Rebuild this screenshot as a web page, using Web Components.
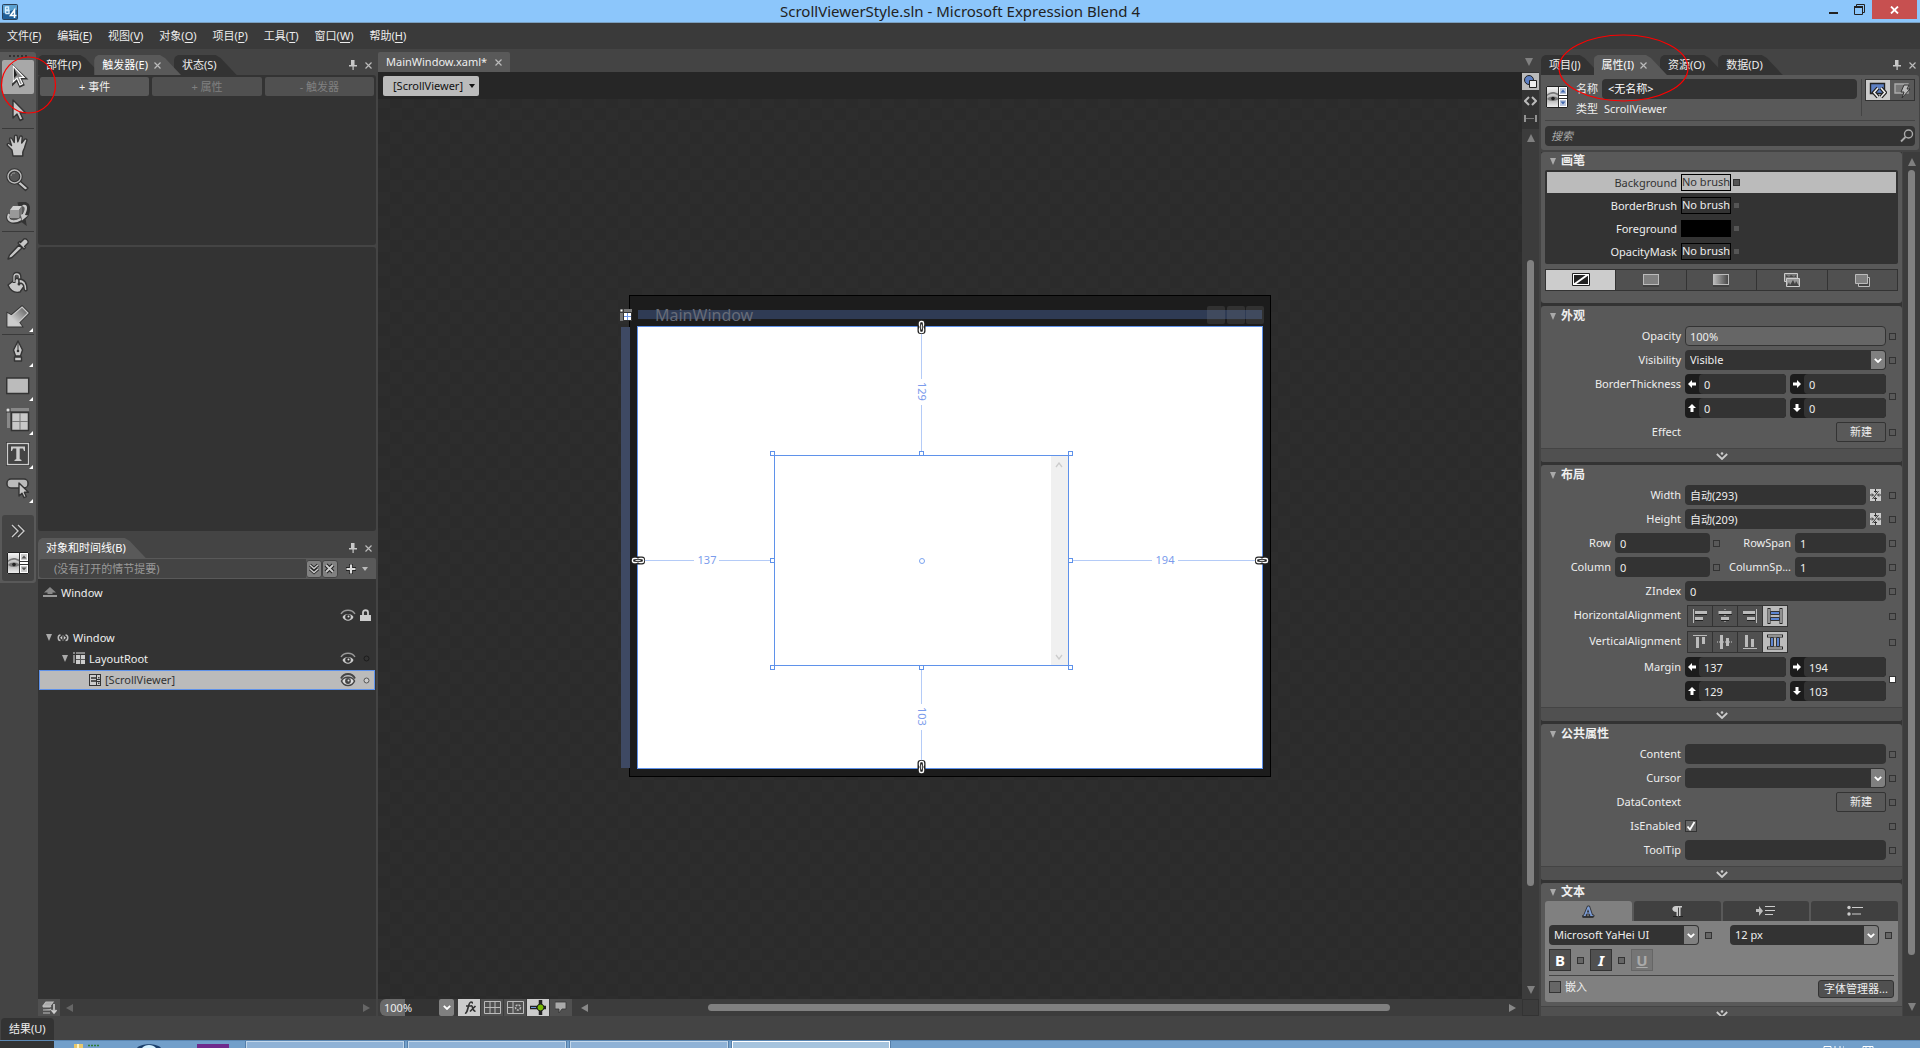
<!DOCTYPE html>
<html lang="zh-CN">
<head>
<meta charset="utf-8">
<title>ScrollViewerStyle.sln - Microsoft Expression Blend 4</title>
<style>
html,body{height:100%;margin:0}
body{background:#444;color:#eee;font:11px/16px "Noto Sans","Noto Sans CJK SC",sans-serif;overflow:hidden}
</style>
</head>
<body>
<blend-app></blend-app>
<script>
const BASE = `*{box-sizing:border-box}
button,input,select{font:inherit;color:inherit;margin:0;padding:0;border:0;background:none;border-radius:0}
button{display:flex;align-items:center;justify-content:center}
svg{display:block}`;

function define(name, css, html, setup) {
  customElements.define(name, class extends HTMLElement {
    connectedCallback() {
      if (this.shadowRoot) return;
      const root = this.attachShadow({ mode: 'open' });
      const t = document.createElement('template');
      t.innerHTML = `<style>${BASE}${css}</style>` + (typeof html === 'function' ? html(this) : html);
      root.appendChild(t.content.cloneNode(true));
      if (setup) setup(this, root);
    }
  });
}

/* ---------- icons: [width, height, markup] ---------- */
const O = 'fill="#c8c8c8" stroke="#333" stroke-width="1.4" stroke-linejoin="round"';
const ICONS = {
  logo: [16,16,`<rect x=".5" y=".5" width="15" height="15" rx="1" fill="#1f5f98" stroke="#2d4258"/><path d="M1 1h14v5C10 5 6 9 1 9z" fill="#5aa0d0"/><path d="M3.500 2.500v7M3.500 3h3v3h-3M3.500 6.500h3.500v3h-3.500" stroke="#d8eefc" stroke-width="1.400" fill="none"/><path d="M12.500 14V6L8.500 11.500H14.500" stroke="#fff" stroke-width="1.600" fill="none"/>`],
  min: [9,9,'<path d="M0 7h9v2H0z" fill="#222"/>'],
  restore: [11,11,'<path d="M.5 2.500h8v8h-8zM2.500 2V.5h8v8H9" fill="none" stroke="#222"/><path d="M0 2h9v2H0z" fill="#222"/>'],
  winclose: [9,8,'<path d="M1 .5l7 7M8 .5l-7 7" stroke="#fff" stroke-width="1.800"/>'],
  close: [7,7,'<path d="M.5 .5l6 6M6.500 .5l-6 6" stroke="#bbb" stroke-width="1.200"/>'],
  pin: [8,10,'<path d="M2 0h4v5h2v1.500H0V5h2zM3.500 6h1.200v4H3.500z" fill="#c8c8c8"/><path d="M5 0h1v5H5z" fill="#888"/>'],
  select: [22,26,`<path d="M6 2v18l4-4 3 6.500 3.500-1.700-3-6.300H19z" fill="#333" stroke="#333" stroke-width="2"/><path d="M6 2v16l4-4 3 7 2.500-1.200-3-6.300H17z" fill="#888" stroke="#fff" stroke-width="1.200"/><path d="M7 4v10l3-3z" fill="#222"/>`],
  direct: [22,26,`<path d="M6 2v18l4-4 3 6.500 3-1.500-3-6.300h5.500z" ${O}/>`],
  hand: [24,24,`<path d="M7 22l-1-6-4.500-4.500c-1-1.500.6-2.800 2-1.700l2 1.700L3.700 5.500c-.3-1.800 1.800-2.300 2.500-.5l2 3.500L8.500 2.500c0-1.800 2.600-1.800 2.700 0l.6 5.300 2-5c.5-1.500 2.700-1 2.400.8L15.700 9l2.700-3.500c1-1.300 3.100-.2 2.400 1.300l-2 6c-.5 2-1.500 3.500-2 5.500V22z" ${O}/>`],
  zoom: [24,24,`<path d="M14 13l8 7-2.500 2.500-8-7z" ${O}/><circle cx="8.500" cy="8.500" r="6.500" fill="#555" stroke="#333" stroke-width="3.500"/><circle cx="8.500" cy="8.500" r="6.500" fill="none" stroke="#bbb" stroke-width="1.400"/><path d="M5 8c.5-2.500 2-3 4-3" stroke="#999" fill="none"/>`],
  rotate: [24,24,`<path d="M3 12c-3 8 5 10 13 6l2 1.500-1-6 5-6c.8-6-4-7-10-5M22 7c0 4-1 7-5 10" fill="none" stroke="#333" stroke-width="4"/><path d="M3 12c-3 8 5 9 12 5" fill="none" stroke="#c8c8c8" stroke-width="2.400"/><path d="M17 3c5-1 5 4 2 10l3 .5-6 5-1.500-7 2 .8C19 8 20 5 16 4z" fill="#c8c8c8"/><path d="M4 8l3-4h9l-3 4z" fill="#d0d0d0"/><path d="M4 8h9v8H4z" fill="#999"/><path d="M13 8l3-4v8l-3 4z" fill="#777"/>`],
  dropper: [24,24,`<path d="M13 8l3 3L6 20.500l-4 1.500 1.500-4z" ${O}/><path d="M12 6l6 6 1.500-1.500-1-1L22 6c1-2-2-5-4-4l-3.500 3.500-1-1z" ${O}/>`],
  bucket: [24,24,`<path d="M2 14L11 7l8 7-5 7c-4 1-9 0-12-7z" ${O}/><path d="M8 12V6c0-5 6-5 6 0v7" fill="none" stroke="#333" stroke-width="3"/><path d="M8 11V6c0-4 5.500-4 5.500 0v7" fill="none" stroke="#c8c8c8" stroke-width="1.300"/><path d="M13 8c5 0 8 4 8 11-1.500 2-3 0-3-2 0-4-2-5-5-5z" ${O}/><circle cx="13" cy="13" r="1.500" fill="#333"/>`],
  gradient: [24,24,`<defs><linearGradient id="g" x1="0" y1="1" x2="1" y2="0"><stop offset=".3" stop-color="#ccc"/><stop offset="1" stop-color="#555"/></linearGradient></defs><path d="M16 2l6 6-9.500 9.500L15 21H2V9l3.500 2z" fill="url(#g)" stroke="#333" stroke-width="3"/><path d="M16 2l6 6-9.500 9.500L15 21H2V9l3.500 2z" fill="url(#g)" stroke="#c8c8c8" stroke-width="1.200"/>`],
  pen: [24,24,`<path d="M12 1l4.500 9-2 6h-5l-2-6z" ${O}/><path d="M8.500 17h7v4h-7z" ${O}/><path d="M12 3v7" stroke="#333"/><circle cx="12" cy="11" r="1.300" fill="#333"/>`],
  rect: [24,18,`<rect x=".7" y="1" width="22" height="15.500" fill="#bbb" stroke="#333" stroke-width="1.500"/>`],
  grid: [24,24,`<path d="M1 0h22v3H1zM1 3h3v17H1z" fill="#888"/><rect x="0" y="0" width="4" height="4" fill="#ddd" stroke="#333"/><rect x="5.500" y="4.500" width="17" height="18" fill="#c8c8c8" stroke="#333" stroke-width="1.500"/><path d="M14 5v17M6 13.500h16" stroke="#777"/>`],
  text: [24,24,`<rect x="1.500" y="1.500" width="21" height="21" fill="#444" stroke="#333" stroke-width="3"/><rect x="1.500" y="1.500" width="21" height="21" fill="none" stroke="#ccc" stroke-width="1.400"/><path d="M5 4.500h14V9h-1l-1-2.500h-3.300V17l1.800 1v1h-7v-1l1.800-1V6.500H7L6 9H5z" fill="#ccc"/>`],
  button: [24,22,`<rect x="1" y="2" width="21" height="9" rx="4" fill="#bbb" stroke="#333" stroke-width="1.500"/><path d="M13 6v13l3-2.800 2 4.500 2.300-1-2-4.400h4.200z" ${O}/>`],
  more: [14,14,'<path d="M1 1l6 6-6 6M7 1l6 6-6 6" fill="none" stroke="#333" stroke-width="3"/><path d="M1 1l6 6-6 6M7 1l6 6-6 6" fill="none" stroke="#ccc" stroke-width="1.400"/>'],
  viewer: [22,22,`<defs><linearGradient id="v" x2="0" y2="1"><stop stop-color="#f4f4f4"/><stop offset=".6" stop-color="#b0b0b0"/><stop offset="1" stop-color="#eee"/></linearGradient></defs><rect width="22" height="22" fill="#fff"/><rect x="1" y="1" width="11" height="20" fill="url(#v)"/><path d="M1 8.500c3-3 7-3.500 11-1v2C8 7 5 7.500 1 10z" fill="#777"/><path d="M1 13c3-3 7-3 11-1v1.500c-3 2-8 2-11-.5z" fill="#777"/><circle cx="7" cy="12.500" r="1.800" fill="#222"/><path d="M12.500 0v22M13 9.500h9M13 12.500h9" stroke="#333"/><path d="M14 2h6v6h-6zM14 14h6v6h-6z" fill="var(--sb,#ccc)"/><path d="M14.500 6.500L17 3.500l2.500 3zM14.500 15.500l2.500 3 2.500-3z" fill="var(--ar,#555)"/><path d="M.5 .5h21v21H.5z" fill="none" stroke="#222"/>`],
  viewersm: [12,12,`<rect x=".5" y=".5" width="11" height="11" fill="#ccc" stroke="#333"/><path d="M2 3h5v2H2zM2 6h5v2H2z" fill="#555"/><path d="M7.500 1v10M8 5.500h3M8 7.500h3" stroke="#333"/><path d="M9 3h1.500v1.500H9zM9 8.500h1.500V10H9z" fill="#444"/>`],
  tri: [8,7,'<path d="M1 0h6L4 7z" fill="#aaa"/>'],
  trisel: [6,5,'<path d="M0 0h6L3 4z" fill="#111"/>'],
  trig: [6,4,'<path d="M0 0h6L3 4z" fill="#bbb"/>'],
  up: [8,8,'<path d="M0 8h8L4 0z" fill="#808080"/>'],
  down: [8,8,'<path d="M0 0h8L4 8z" fill="#808080"/>'],
  left: [7,8,'<path d="M7 0v8L0 4z" fill="var(--tri,#888)"/>'],
  right: [7,8,'<path d="M0 0v8l7-4z" fill="var(--tri,#888)"/>'],
  chevrons: [12,12,'<path d="M2 2l4 3.500L10 2M2 6l4 3.500L10 6" fill="none" stroke="#222" stroke-width="3"/><path d="M2 2l4 3.500L10 2M2 6l4 3.500L10 6" fill="none" stroke="#ccc" stroke-width="1.400"/>'],
  clearx: [12,12,'<path d="M2 2l7 7M9 2L2 9" stroke="#222" stroke-width="4"/><path d="M2 2l7 7M9 2L2 9" stroke="#ccc" stroke-width="1.800"/>'],
  plus: [10,10,'<path d="M5 0v10M0 5h10" stroke="#222" stroke-width="4"/><path d="M5 .5v9M.5 5h9" stroke="#ddd" stroke-width="2.200"/>'],
  scope: [14,11,'<path d="M1 5.500L7 0l6 5.500H9.500V7h-5V5.500z" fill="#888"/><path d="M0 8h14v2H0z" fill="#999"/>'],
  eye: [16,13,'<path d="M1 5c3-5 11-5 14 0" fill="none" stroke="#999" stroke-width="1.300"/><path d="M2.500 8c2-4 9-4 11 0-2 5-9 5-11 0z" fill="#ccc"/><circle cx="8" cy="8" r="2.800" fill="#333"/><circle cx="8.500" cy="7.500" r="1" fill="#ddd"/>'],
  eyedark: [16,14,'<path d="M1 5.500c3-6 11-6 14 0" fill="none" stroke="#444" stroke-width="1.800"/><path d="M1.500 8c2.500-5 10.500-5 13 0-2.500 6-10.500 6-13 0z" fill="#ddd" stroke="#444" stroke-width="1.500"/><circle cx="8" cy="8" r="2.900" fill="#444"/><circle cx="8.500" cy="7.500" r="1" fill="#ddd"/>'],
  lock: [12,12,'<path d="M3 6V3.500c0-3 5-3 5 0V6" fill="none" stroke="#ccc" stroke-width="1.800"/><path d="M0 6h11v6H0z" fill="#ccc"/>'],
  dotdark: [7,7,'<circle cx="3.500" cy="3.500" r="2.500" fill="none" stroke="#1c1c1c"/>'],
  dotlight: [7,7,'<circle cx="3.500" cy="3.500" r="2.500" fill="#ccc" stroke="#555"/>'],
  winnode: [12,8,'<path d="M3.500 1C.5 1 .5 6.500 3.500 6.500M8.500 1c3 0 3 5.500 0 5.500" fill="none" stroke="#bbb" stroke-width="1.500"/><path d="M5 2L3 3.800 5 5.500zM7 2l2 1.800L7 5.500z" fill="#ccc"/><path d="M6 1v6" stroke="#888"/>'],
  gridnode: [12,13,'<path d="M0 0h2v2H0zM3 0h9v2H3zM0 3h2v8H0z" fill="#888"/><path d="M3 3h9v9H3z" fill="#ccc"/><path d="M7.500 3v9M3 7.500h9" stroke="#555"/>'],
  stack: [15,14,'<path d="M4 1h7L8 5H1zM1 6h7l1-1M1 9h7l1-1M1 12h7" fill="#aaa" stroke="#bbb" stroke-width="1.200"/><path d="M12 3v8M9.500 9l2.500 3 2.500-3" fill="none" stroke="#ccc" stroke-width="1.600"/>'],
  fx: [15,15,'<path d="M3 13c3 1 3-11 6-11 1 0 1.500.5 1 1.500M4 6h5M9 6c2-1 1.500 6 4.500 5M13.500 6L8 11.500" fill="none" stroke="#333" stroke-width="1.700"/>'],
  gridon: [17,13,'<path d="M.5 .5h16v12H.5zM6 1v11M11 1v11M1 6.500h15" fill="none" stroke="#bbb"/>'],
  gridsnap: [17,13,'<path d="M.5 .5h16v12H.5zM6 1v11M1 6.500h5" fill="none" stroke="#bbb"/><circle cx="11" cy="6.500" r="2.500" fill="none" stroke="#bbb" stroke-dasharray="2 1" stroke-width="1.500"/>'],
  snap: [17,15,'<path d="M0 7.500h16M10.500 0v15" stroke="#222" stroke-width="3.500"/><path d="M1 7.500h5" stroke="#6d96d8"/><circle cx="10.500" cy="7.500" r="3.400" fill="#76b900" stroke="#222"/>'],
  note: [13,13,'<path d="M0 1h11v7H7l-3 4V8H0z" fill="#aaa" stroke="#333" stroke-width=".8"/>'],
  design: [13,13,'<circle cx="5" cy="5" r="4.500" fill="#5d7fc2" stroke="#222"/><path d="M5.500 5.500h7v7h-7z" fill="#eee" stroke="#222"/>'],
  xaml: [13,10,'<path d="M5 1L1 5l4 4M8 1l4 4-4 4" fill="none" stroke="#bbb" stroke-width="2"/>'],
  split: [13,9,'<path d="M1 0v7M12 0v7" stroke="#bbb" stroke-width="1.400"/><path d="M2.500 3.500h8" stroke="#bbb" stroke-dasharray="1 1"/>'],
  propview: [18,17,'<path d="M1.500 1.500h14v10h-14z" fill="#5d7fc2" stroke="#222" stroke-width="1.400"/><path d="M9 6l-4 4.500L9 15M12 6l4 4.500-4 4.500" fill="none" stroke="#222" stroke-width="4"/><path d="M9 6l-4 4.500L9 15M12 6l4 4.500-4 4.500" fill="none" stroke="#eee" stroke-width="1.600"/>'],
  eventview: [18,17,'<path d="M2 2h13v9H2z" fill="#777" stroke="#aaa" stroke-width="1.400"/><path d="M11 3h5l-2 4h3l-8 9 2-6H8z" fill="#bbb" stroke="#333"/>'],
  search: [14,14,'<circle cx="8.500" cy="5" r="4" fill="none" stroke="#aaa" stroke-width="1.400"/><path d="M5.500 8L1 12.500" stroke="#aaa" stroke-width="1.800"/>'],
  bnone: [18,14,'<rect x="1" y="1" width="16" height="12" fill="#222"/><rect x="1.500" y="1.500" width="15" height="10" fill="#222" stroke="#fff"/><path d="M2 11.500L16 1.500" stroke="#fff" stroke-width="2"/><path d="M.5 .5h17v12H.5z" fill="none" stroke="#222"/>'],
  bsolid: [18,14,'<rect x="1.500" y="1.500" width="15" height="10" fill="#808080" stroke="#bbb"/><path d="M1 13h16" stroke="#333"/>'],
  bgrad: [18,14,'<defs><linearGradient id="b"><stop stop-color="#bbb"/><stop offset="1" stop-color="#444"/></linearGradient></defs><rect x="1.500" y="1.500" width="15" height="10" fill="url(#b)" stroke="#bbb"/><path d="M1 13h16" stroke="#333"/>'],
  btile: [18,16,'<path d="M1.500 1.500h13v8h-13z" fill="#777" stroke="#ccc"/><path d="M3.500 6.500h13v8h-13z" fill="#999" stroke="#ccc"/><path d="M4 14l2-4 1 3 3-5 2 4 1-3 3 5zM3 3l3 2 2-2 3 2 2-2v2H3z" fill="#444"/>'],
  bres: [17,15,'<path d="M4.500 4.500h11v9h-11z" fill="#444" stroke="#bbb"/><path d="M1.500 1.500h12v9h-12z" fill="#808080" stroke="#bbb"/>'],
  chev: [8,5,'<path d="M.8 .8L4 4 7.200 .8" fill="none" stroke="#fff" stroke-width="1.800"/>'],
  expand: [12,8,'<path d="M.8 2L6 7l5.200-5" fill="none" stroke="#ccc" stroke-width="1.800"/><circle cx="6" cy="1.500" r="1.300" fill="#ccc"/>'],
  al: [8,8,'<path d="M0 4l4-4v2.500h4v3H4V8z" fill="#fff"/>'],
  ar: [8,8,'<path d="M8 4L4 0v2.500H0v3h4V8z" fill="#fff"/>'],
  au: [8,8,'<path d="M4 0L0 4h2.500v4h3V4H8z" fill="#fff"/>'],
  ad: [8,8,'<path d="M4 8L0 4h2.500V0h3v4H8z" fill="#fff"/>'],
  auto: [11,12,'<rect width="11" height="12" fill="#ccc"/><path d="M2.500 10L8.500 2" stroke="#333"/><path d="M5.500 0v3M4 2l1.500 1.500L7 2M5.500 12V9M4 10l1.500-1.500L7 10M0 6h3M2 4.500L3.500 6 2 7.500M11 6H8M9 4.500L7.500 6 9 7.500" stroke="#333" fill="none"/>'],
  hl: [16,16,'<path d="M1.500 1v14" stroke="#bbb"/><path d="M3 3h12v3H3zM3 9h8v3H3z" fill="#bbb"/><path d="M3 6.500h12M3 12.500h8" stroke="#222"/>'],
  hc: [16,16,'<path d="M8 1v14" stroke="#ccc" stroke-dasharray="1 1"/><path d="M1.500 3h13v3h-13zM4 9h8v3H4z" fill="#bbb"/><path d="M2 6.500h13M4 12.500h8" stroke="#222"/>'],
  hr: [16,16,'<path d="M14.500 1v14" stroke="#bbb"/><path d="M1 3h12v3H1zM5 9h8v3H5z" fill="#bbb"/><path d="M1 6.500h12M5 12.500h8" stroke="#222"/>'],
  hs: [16,16,'<path d="M3 3h10v10H3z" fill="#bbb"/><path d="M2 0v16M14 0v16" stroke="#222" stroke-width="3"/><path d="M2 1v14M14 1v14" stroke="#fff"/><path d="M3.500 3.500h9v3h-9zM3.500 9.500h9v3h-9z" fill="#5d85d0" stroke="#333"/>'],
  vt: [16,16,'<path d="M1 1.500h14" stroke="#bbb"/><path d="M4 3h3v11H4zM10 3h3v7h-3z" fill="#bbb"/>'],
  vc: [16,16,'<path d="M0 8h16" stroke="#ccc" stroke-dasharray="1 1"/><path d="M3 1h3v14H3zM9 4h3v8H9z" fill="#bbb"/>'],
  vb: [16,16,'<path d="M1 14.500h14" stroke="#bbb"/><path d="M3 1h3v12H3zM9 5h3v8H9z" fill="#bbb"/>'],
  vs: [16,16,'<path d="M3 3h10v10H3z" fill="#bbb"/><path d="M0 2h16M0 14h16" stroke="#222" stroke-width="3"/><path d="M1 2h14M1 14h14" stroke="#fff"/><path d="M3.500 3.500h3v9h-3zM9.500 3.500h3v9h-3z" fill="#5d85d0" stroke="#333"/>'],
  fontA: [14,13,'<path d="M1.500 12h11" stroke="#222" stroke-width="1.500"/><path d="M6.500 1h2l3 9h1.500v1.500H8v-1h1L8.500 9h-3L5 10.500h1v1H1.500V10.500h1z" fill="#7f9fd8" stroke="#222" stroke-width=".8"/><path d="M5.800 7.500h2.500L7 4z" fill="#333"/>'],
  para: [12,12,'<path d="M5 1h6v1.500H9.500V11H8V2.500H7V11H5.500V7C0 7 0 1 5 1z" fill="#ccc"/><path d="M2 11.500h4M8 11.500h4" stroke="#222"/>'],
  indent: [20,12,'<path d="M0 4h3V1l4 5-4 5V7H0z" fill="#bbb"/><path d="M9 1.500h10M9 5.500h10M9 9.500h8" stroke="#ccc"/>'],
  bullets: [16,12,'<circle cx="2" cy="2.500" r="1.700" fill="#ccc"/><circle cx="2" cy="9" r="1.700" fill="#ccc"/><path d="M5 2.500h11M5 9h9" stroke="#ccc" stroke-width="1.200"/>'],
  check: [10,10,'<path d="M1.500 5.500L4 8.500 8.500 1" fill="none" stroke="#fff" stroke-width="1.800"/>'],
  linkv: [9,14,'<rect x=".5" y="0" width="8" height="14" rx="3" fill="#222"/><rect x="2.500" y="1.500" width="4" height="5" rx="1.500" fill="none" stroke="#fff" stroke-width="1.400"/><rect x="2.500" y="7.500" width="4" height="5" rx="1.500" fill="none" stroke="#fff" stroke-width="1.400"/><path d="M4.500 4.500v5" stroke="#222" stroke-width="2.600"/><path d="M4.500 4.500v5" stroke="#ddd"/>'],
  linkh: [14,9,'<rect x="0" y=".5" width="14" height="8" rx="3" fill="#222"/><rect x="1.500" y="2.500" width="5" height="4" rx="1.500" fill="none" stroke="#fff" stroke-width="1.400"/><rect x="7.500" y="2.500" width="5" height="4" rx="1.500" fill="none" stroke="#fff" stroke-width="1.400"/><path d="M4.500 4.500h5" stroke="#222" stroke-width="2.600"/><path d="M4.500 4.500h5" stroke="#ddd"/>'],
  corner: [12,12,'<path d="M0 0h3v3H0z" fill="#fff" stroke="#444"/><path d="M4 0h8v3H4zM0 4h3v8H0z" fill="#777"/><path d="M3.500 3.500h8v8h-8z" fill="#fff" stroke="#333"/><path d="M7.500 4v7M4 7.500h7" stroke="#6d96e8"/>'],
  sup: [8,6,'<path d="M1 5l3-4 3 4" fill="none" stroke="#ccc" stroke-width="1.300"/>'],
  sdown: [8,6,'<path d="M1 1l3 4 3-4" fill="none" stroke="#ccc" stroke-width="1.300"/>'],
  tfolder: [26,4,'<path d="M0 0h9v4H0z" fill="#e8c76a"/><path d="M3 0h2v4H3z" fill="#fff3c0"/><path d="M14 1.500h12" stroke="#2e7d32" stroke-width="1.500" stroke-dasharray="2 1"/>'],
  tcircle: [24,4,'<path d="M0 4C4-1 20-1 24 4z" fill="#1b3f6b"/><path d="M5 4C8 0 16 0 19 4z" fill="#d5f1ff"/>'],
  tie: [20,4,'<path d="M0 4C5 0 10-1 19 1l-1 3h-4V2C10 1 6 3 4 4z" fill="#f6c51d"/><path d="M4 4c3-2 7-2 9 0z" fill="#2d8fd8"/>'],
  tdir: [22,4,'<path d="M0 0l7 .5 1 1.500 12 1v1H1z" fill="#f0dc8c"/>'],
  twin: [30,4,'<path d="M0 0h30v4H0z" fill="#555"/><path d="M1 1h28v3H1z" fill="#f5f5f5"/><path d="M3 2h16l4 2H3z" fill="#7fc8e8"/>']
};
define('blend-icon', ':host{display:inline-flex;flex:none}', el => {
  const [w, h, s] = ICONS[el.getAttribute('name')];
  return `<svg width="${w}" height="${h}" viewBox="0 0 ${w} ${h}" fill="none" aria-hidden="true">${s}</svg>`;
});
const I = n => `<blend-icon name="${n}"></blend-icon>`;

/* ---------- window chrome ---------- */
define('title-bar', `
:host{display:grid;grid-template-columns:1fr auto 1fr;height:23px;background:#8cc6fb;border-bottom:1px solid #7a9fc0;color:#222;font-size:15px;line-height:22px}
.logo{padding:3px 2px}
.win{display:flex;justify-content:flex-end;padding-right:3px}
.win button{width:26px;height:19px}
.win .x{width:45px;background:#c75050}`,
`<span class="logo">${I('logo')}</span><span>ScrollViewerStyle.sln - Microsoft Expression Blend 4</span>
<span class="win"><button aria-label="最小化">${I('min')}</button><button aria-label="还原">${I('restore')}</button><button class="x" aria-label="关闭">${I('winclose')}</button></span>`);

define('menu-bar', `
:host{display:flex;gap:16px;align-items:center;height:26px;padding-left:7px;background:#3a3a3a}
button{white-space:nowrap}u{text-underline-offset:2px}`,
[['文件','F'],['编辑','E'],['视图','V'],['对象','O'],['项目','P'],['工具','T'],['窗口','W'],['帮助','H']]
.map(([a,b]) => `<button><span>${a}(<u>${b}</u>)</span></button>`).join(''));

/* tabs="a|b|c" active="1" */
define('dock-tabs', `
:host{display:flex;align-items:center;height:20px;padding-right:4px}
button{height:20px;padding:0 20px 0 8px;gap:6px;background:#333;white-space:nowrap;margin-right:-7px;
clip-path:polygon(0 5px,1px 2px,4px 0,calc(100% - 21px) 0,calc(100% - 16px) 3px,100% 100%,0 100%)}
button.on{background:#595959;position:relative;z-index:1;color:#fff}
.sp{flex:1}blend-icon+blend-icon{margin-left:8px}`,
el => {
  const a = +el.getAttribute('active');
  return el.getAttribute('tabs').split('|').map((t,i) => `<button class="${i===a?'on':''}">${t}${i===a&&!el.hasAttribute('plain')?I('close'):''}</button>`).join('')
   + `<span class="sp"></span>${I('pin')}${I('close')}`;
});

define('scroll-track', `
:host{display:flex;align-items:center;justify-content:space-between;background:#3c3c3c;flex:none}
:host([vertical]){flex-direction:column;width:17px}
.lane{flex:1;align-self:stretch;display:flex;margin:0 var(--inset)}
:host([vertical]) .lane{flex-direction:column;margin:var(--inset) 0;align-items:center}
.thumb{background:#808080;border-radius:4px;align-self:center;height:7px}
:host([vertical]) .thumb{width:7px;height:auto}`,
el => {
  const v = el.hasAttribute('vertical');
  const [a,b,c] = (el.getAttribute('parts') || '1 0 0').split(' ');
  return I(v?'up':'left') + `<span class="lane"><span style="flex:${a}"></span><span class="thumb" style="flex:${b}"></span><span style="flex:${c}"></span></span>` + I(v?'down':'right');
});

/* ---------- toolbox ---------- */
define('tool-box', `
:host{display:flex;flex-direction:column;width:36px;background:#595959;border-radius:0 3px 3px 0;padding:0 2px 2px;align-self:flex-start}
.grip{margin:3px 7px 0;border-top:2px dotted #333;height:5px}
button{width:32px;height:34px;position:relative}
button.on{background:#a8a8a8;border-radius:2px}
button.more::after{content:"";position:absolute;right:1px;bottom:2px;border:2px solid;border-color:transparent #fff #fff transparent}
hr{height:1px;border:0;margin:0;background:#3a3a3a;width:100%}
.sub{background:#444;border-radius:3px;margin-top:10px;padding-bottom:2px}.sub button{height:32px}`,
(() => {
  const b = (n,l,c='') => `<button class="${c}" aria-label="${l}">${I(n)}</button>`;
  return `<div class="grip"></div>${b('select','选择','on')}${b('direct','直接选择')}<hr>${b('hand','平移')}${b('zoom','缩放')}${b('rotate','照相机')}<hr>${b('dropper','滴管')}${b('bucket','油漆桶')}${b('gradient','渐变','more')}<hr>${b('pen','钢笔','more')}${b('rect','矩形','more')}${b('grid','网格','more')}${b('text','文本','more')}${b('button','按钮','more')}<div class="sub">${b('more','资产')}${b('viewer','ScrollViewer')}</div>`;
})());

/* ---------- left panels ---------- */
define('trigger-panel', `
:host{display:flex;flex-direction:column}
.pane{background:#333;border-radius:3px}
.a{height:170px}.b{height:284px;margin-top:2px}
.bar{display:grid;grid-template-columns:1fr 1fr 1fr;gap:3px;padding:2px}
.bar button{height:19px;background:#595959;border-radius:2px}.bar button:disabled{background:#505050;color:#808080}`,
`<dock-tabs tabs="部件(P)|触发器(E)|状态(S)" active="1"></dock-tabs>
<div class="pane a"><div class="bar"><button>+ 事件</button><button disabled>+ 属性</button><button disabled>- 触发器</button></div></div><div class="pane b"></div>`);

define('objects-panel', `
:host{display:flex;flex-direction:column;flex:1;margin-top:7px;min-height:0}
.story{display:flex;align-items:center;height:21px;background:#595959;padding:0 4px 0 1px;border-radius:0 2px 0 0}
.story input{flex:1;min-width:0;height:19px;background:#444;border-radius:3px 0 0 3px;padding-left:15px;color:#999}
.story input::placeholder{color:#999;opacity:1}
.story button{width:16px;height:18px;background:#808080;border:1px solid #444;border-radius:3px}
.story .p{background:none;border:0;width:14px}
.tree{flex:1;background:#333;padding-top:3px;min-height:0}
.r{display:flex;align-items:center;gap:4px;height:21px;padding:0 4px 0 5px}
.r .sp{flex:1}.r>:last-child:not(span){width:12px;justify-content:center}
.tall{height:24px}
.sel{height:20px;margin:1px 1px 0;padding-right:2px;background:#bbb;color:#333;border:1px solid #5f92ea}
.foot{display:flex;height:17px;background:#3c3c3c;align-items:center}
.foot button{width:22px;height:17px;background:#505050}
.foot scroll-track{flex:1;--tri:#666;padding:0 6px}`,
`<dock-tabs plain tabs="对象和时间线(B)" active="0"></dock-tabs>
<div class="story"><input aria-label="情节提要" placeholder="(没有打开的情节提要)" readonly><button aria-label="列表">${I('chevrons')}</button><button aria-label="关闭情节提要">${I('clearx')}</button><button class="p" style="margin-left:6px" aria-label="新建">${I('plus')}</button><button class="p" aria-label="更多">${I('trig')}</button></div>
<div class="tree">
<div class="r">${I('scope')}<span>Window</span></div>
<div class="r tall"><span class="sp"></span>${I('eye')}${I('lock')}</div>
<div class="r" style="padding-left:7px">${I('tri')}${I('winnode')}<span>Window</span></div>
<div class="r" style="padding-left:23px">${I('tri')}${I('gridnode')}<span>LayoutRoot</span><span class="sp"></span>${I('eye')}${I('dotdark')}</div>
<div class="r sel" style="padding-left:49px">${I('viewersm')}<span>[ScrollViewer]</span><span class="sp"></span>${I('eyedark')}${I('dotlight')}</div>
</div>
<div class="foot"><button aria-label="排列顺序">${I('stack')}</button><scroll-track></scroll-track></div>`);

/* ---------- design surface: nodes on a free canvas ---------- */
define('design-surface', `
:host{position:relative;width:642px;height:482px;background:#1c1c1c;border:1px solid #000;flex:none;color:#7b9cec}
:host *{position:absolute}
.title{left:25px;top:9px;font-size:16px;line-height:20px;color:#666b78;z-index:1}
.band{background:#2f3b54;left:8px;right:8px;top:14px;height:9px}
.side{background:#3e4963;left:-9px;width:9px;top:31px;bottom:8px}
.w{width:18px;height:18px;top:10px;background:#8883;border-radius:2px}
.page{left:7px;top:30px;width:626px;height:443px;background:#fff;border:1px solid #5f92ea}
.box{left:144px;top:159px;width:295px;height:211px;border:1px solid #5f92ea}
.bar{right:0;top:0;bottom:0;width:17px;background:#f0f0f0}
.bar :first-child{top:6px;left:4px}.bar :last-child{bottom:5px;left:4px}
.h{width:5px;height:5px;border:1px solid #5f92ea;background:#fff}
.o{width:6px;height:6px;border:1px solid #7ba4f0;border-radius:3px}
.l{background:#b4cbf7}.n{line-height:14px;text-align:center;width:24px}
.v{writing-mode:vertical-rl;width:14px;height:24px}`,
`<span class="side"></span><span class="band"></span><span class="title">MainWindow</span>
<span class="w" style="right:45px"></span><span class="w" style="right:25px"></span><span class="w" style="right:6px"></span>
<div class="page"></div><div class="box"><div class="bar">${I('sup')}${I('sdown')}</div></div>
<span class="l" style="left:15px;width:49px;top:264px;height:1px"></span><span class="n" style="left:65px;top:257px">137</span><span class="l" style="left:89px;width:52px;top:264px;height:1px"></span>
<span class="l" style="left:443px;width:79px;top:264px;height:1px"></span><span class="n" style="left:523px;top:257px">194</span><span class="l" style="left:548px;width:79px;top:264px;height:1px"></span>
<span class="l" style="left:291px;width:1px;top:38px;height:45px"></span><span class="n v" style="left:285px;top:84px">129</span><span class="l" style="left:291px;width:1px;top:109px;height:46px"></span>
<span class="l" style="left:291px;width:1px;top:374px;height:34px"></span><span class="n v" style="left:285px;top:409px">103</span><span class="l" style="left:291px;width:1px;top:434px;height:32px"></span>
${[[140,155],[289,155],[438,155],[140,262],[438,262],[140,369],[289,369],[438,369]].map(([x,y]) => `<span class="h" style="left:${x}px;top:${y}px"></span>`).join('')}
<span class="o" style="left:289px;top:262px"></span>
<blend-icon name="corner" style="left:-10px;top:13px"></blend-icon>
<blend-icon name="linkv" style="left:287px;top:24px"></blend-icon><blend-icon name="linkv" style="left:287px;top:464px"></blend-icon>
<blend-icon name="linkh" style="left:1px;top:260px"></blend-icon><blend-icon name="linkh" style="left:625px;top:260px"></blend-icon>`);

define('document-view', `
:host{display:flex;flex-direction:column;flex:1;min-width:0;margin:3px 2px 0 2px}
.tabs{display:flex;height:20px;justify-content:space-between;align-items:center;padding-right:6px}
.tabs button{height:20px;padding:0 8px;gap:8px;background:#595959;border-radius:2px 2px 0 0}
.mid{flex:1;display:flex;min-height:0}
.canvas{flex:1;min-width:0;display:flex;align-items:center;justify-content:center;overflow:hidden;position:relative;
background:repeating-conic-gradient(#2b2b2b 0 25%,#2d2d2d 0 50%) 0 0/24px 24px}
.crumb{position:absolute;left:0;right:0;top:0;height:27px;background:#262626;padding:4px 5px}
.crumb button{height:20px;padding:0 4px 0 10px;gap:6px;background:#bbb;color:#111;border-radius:2px}
.side{display:flex;flex-direction:column;width:17px;background:#333}
.side button{width:17px;height:19px;flex:none}.side .on{background:#bbb;height:17px;margin:1px 0}
.side scroll-track{flex:1;padding:5px 0;--inset:0}
.foot{display:flex;align-items:center;height:17px;background:#3c3c3c;padding-left:2px}
.zoom{display:flex;position:relative;margin-right:4px}
.zoom select{width:74px;height:17px;appearance:none;background:linear-gradient(90deg,#6a6a6a 25px,#333 25px);border-radius:6px 0 0 6px;padding-left:4px}
.zoom span{position:absolute;right:0;top:0;width:15px;height:17px;background:#808080;border-radius:2px;display:grid;place-items:center;pointer-events:none}
.foot button{width:22px;height:17px;margin-right:1px;background:#505050}.foot .on{background:#ccc}
.foot scroll-track{flex:1;padding:0 6px 0 8px}.cn{width:17px;height:17px;border:1px solid #333}`,
`<div class="tabs"><button>MainWindow.xaml*${I('close')}</button>${I('down')}</div>
<div class="mid"><div class="canvas"><design-surface></design-surface><div class="crumb"><button>[ScrollViewer]${I('trisel')}</button></div></div>
<div class="side"><button class="on" aria-label="设计">${I('design')}</button><button aria-label="XAML">${I('xaml')}</button><button aria-label="拆分">${I('split')}</button><scroll-track vertical parts="118 625 100"></scroll-track></div></div>
<div class="foot"><span class="zoom"><select aria-label="缩放比例"><option>100%</option></select><span>${I('chev')}</span></span>
<button class="on" aria-label="效果">${I('fx')}</button><button aria-label="显示网格">${I('gridon')}</button><button aria-label="对齐网格">${I('gridsnap')}</button><button class="on" aria-label="对齐线">${I('snap')}</button><button aria-label="批注">${I('note')}</button>
<scroll-track parts="120 682 119"></scroll-track><span class="cn"></span></div>`);

/* ---------- property inspector ---------- */
define('prop-section', `
:host{display:block;background:#595959;border-radius:3px;margin-bottom:3px;flex:none}
h3{margin:0;height:20px;display:flex;align-items:center;gap:4px;padding-left:8px;font-size:12px;line-height:18px;font-weight:700}
.body{display:flex;flex-direction:column;gap:4px;padding-bottom:6px}
:host([brush]) .body{padding-bottom:12px;gap:5px}:host([brush]) h3,:host([txt]) h3{height:18px}:host([txt]) .body{gap:0;padding-bottom:4px}
.more{width:100%;height:14px;background:#505050;border-top:1px solid #444;border-radius:0 0 3px 3px}`,
el => `<h3>${I('tri')}${el.getAttribute('heading')}</h3><div class="body"><slot></slot></div>${el.hasAttribute('brush')?'':`<button class="more" aria-label="显示高级属性">${I('expand')}</button>`}`);

define('value-marker', `:host{display:block;width:7px;height:7px;border:1px solid #333;flex:none;background:var(--mk,transparent)}`, '');

/* kind: text | slider | select | thick | new | auto | check | pair | align */
let uid = 0;
define('prop-row', `
:host{display:flex;padding-right:6px;gap:3px;align-items:center}
label,.lb{width:140px;text-align:right;flex:none;line-height:20px;align-self:flex-start;white-space:nowrap}
.f{flex:1;display:flex;gap:4px;min-width:0;align-items:center;padding-left:1px}
input,select{height:20px;background:#333;border-radius:4px;padding-left:5px;min-width:0;flex:1;width:0}
.slider{background:#666;border:1px solid #333;padding-left:4px}
.s{position:relative;display:flex;flex:1}.s select{appearance:none}
.s span{position:absolute;right:1px;top:1px;width:14px;height:18px;border-radius:0 3px 3px 0;background:#808080;display:grid;place-items:center;pointer-events:none}
.t{display:grid;grid-template-columns:101px 1fr;gap:4px}
.t span{display:flex;background:#1c1c1c;border-radius:4px;align-items:center}.t blend-icon{width:14px;justify-content:center}
.new{margin-left:auto;width:50px;height:20px;border:1px solid #333;border-radius:2px}
.auto{width:16px;justify-content:flex-start}
.c{position:relative;display:flex}.c input{appearance:none;flex:none;width:12px;height:12px;border:1px solid #333;background:#666;border-radius:0;padding:0}
.c blend-icon{position:absolute;left:1px;top:1px;pointer-events:none}
.pair .a{width:70px}.pair .b{width:67px}.pair input{flex:none}.pair .i1{width:95px}.pair .i2{flex:1}
.pair value-marker{margin-left:-1px}.pair label{align-self:center}
.al{display:flex;margin-left:2px;border:1px solid #333;background:#333;gap:1px}.al button{width:24px;height:20px;background:#505050}.al .on{background:#bbb}`,
el => {
  const k = el.getAttribute('kind'), L = el.getAttribute('label'), v = (el.getAttribute('value') || ''), id = 'p' + (++uid);
  const mk = `<value-marker${el.hasAttribute('set')?' style="--mk:#fff"':''}></value-marker>`;
  if (k === 'pair') {
    const [a,b] = L.split('|'), [x,y] = v.split('|');
    return `<div class="f pair" style="padding:0"><label class="a" for="a${id}">${a}</label><input class="i1" id="a${id}" value="${x}"><value-marker></value-marker><label class="b" for="b${id}">${b}</label><input class="i2" id="b${id}" value="${y}"></div>${mk}`;
  }
  if (k === 'thick') {
    const vs = v.split('|'), nm = ['左','右','上','下'];
    return `<span class="lb">${L}</span><div class="f"><div class="t" style="flex:1">${['al','ar','au','ad'].map((n,i) => `<span>${I(n)}<input aria-label="${L} ${nm[i]}" value="${vs[i]}"></span>`).join('')}</div></div>${mk}`;
  }
  if (k === 'align')
    return `<span class="lb">${L}</span><div class="f"><div class="al">${v.split('|').map((n,i) => `<button class="${i===3?'on':''}" aria-label="${L} ${i+1}">${I(n)}</button>`).join('')}</div></div>${mk}`;
  const f = {
    text: () => `<input id="${id}" value="${v}">`,
    slider: () => `<input class="slider" id="${id}" value="${v}">`,
    auto: () => `<input id="${id}" value="${v}"><button class="auto" aria-label="${L} 设为自动">${I('auto')}</button>`,
    select: () => `<span class="s"><select id="${id}"><option>${v}</option></select><span>${I('chev')}</span></span>`,
    new: () => `<button class="new" id="${id}">新建</button>`,
    check: () => `<span class="c"><input type="checkbox" id="${id}" checked>${I('check')}</span>`
  }[k]();
  return `<label for="${id}">${L}</label><div class="f">${f}</div>${mk}`;
});

define('brush-editor', `
:host{display:flex;flex-direction:column;gap:5px;margin:0 4px}
.list{background:#333;border-radius:2px;padding:2px;display:flex;flex-direction:column;gap:2px}
.row{display:flex;align-items:center;height:21px;gap:4px;line-height:14px}
.row>span:first-child{width:130px;text-align:right}
.sw{width:50px;height:17px;border:1px solid #000;text-align:center;white-space:nowrap}
.row value-marker{--mk:#555;margin-left:-2px}.row.on{background:#bbb;color:#333}
.modes{display:grid;grid-template-columns:repeat(5,1fr);gap:1px;background:#333;border:1px solid #333}
.modes button{height:20px;background:#505050}.modes .on{background:#ccc}`,
`<div class="list">${['Background','BorderBrush','Foreground','OpacityMask'].map((n,i) => `<div class="row ${i?'':'on'}"><span>${n}</span><span class="sw"${i===2?' style="background:#000"':''}>${i===2?'':'No brush'}</span><value-marker></value-marker></div>`).join('')}</div>
<div class="modes">${['bnone','bsolid','bgrad','btile','bres'].map((n,i) => `<button class="${i?'':'on'}" aria-label="画笔 ${i+1}">${I(n)}</button>`).join('')}</div>`);

define('text-editor', `
:host{display:block;margin:0 4px}
.tabs{display:grid;grid-template-columns:repeat(4,1fr);gap:2px}
.tabs button{height:20px;background:#404040;border-radius:3px 3px 0 0}.tabs .on{background:#808080}
.body{background:#808080;border-radius:0 0 3px 3px;padding:4px 4px 2px}
.r{display:flex;align-items:center}
.s{position:relative;display:flex}.s select{appearance:none;width:100%;height:20px;background:#333;border-radius:4px;padding-left:5px}
.s span{position:absolute;right:1px;top:1px;width:14px;height:18px;border-radius:0 3px 3px 0;background:#808080;display:grid;place-items:center;pointer-events:none}
value-marker{--mk:#666;margin:0 6px}
.b{gap:0;padding:4px 0;border-bottom:1px solid #444}
.b button{width:22px;height:22px;background:#505050;border:1px solid #333;font-size:15px;font-weight:700;color:#fff}
.b button:disabled{background:#757575;border-color:#666;color:#aaa}
.e{justify-content:space-between;height:24px}.e label{display:flex;gap:4px;align-items:center;padding-bottom:2px}
.e input{appearance:none;width:12px;height:12px;border:1px solid #333;background:#666}
.e button{width:76px;height:18px;border:1px solid #333;border-radius:3px;background:#505050;margin-top:2px}`,
`<div class="tabs">${['fontA','para','indent','bullets'].map((n,i) => `<button class="${i?'':'on'}" aria-label="文本 ${i+1}">${I(n)}</button>`).join('')}</div>
<div class="body"><div class="r"><span class="s" style="flex:150"><select aria-label="字体"><option>Microsoft YaHei UI</option></select><span>${I('chev')}</span></span><value-marker></value-marker><span class="s" style="flex:149;margin-left:12px"><select aria-label="字号"><option>12 px</option></select><span>${I('chev')}</span></span><value-marker style="margin-right:2px"></value-marker></div>
<div class="r b"><button>B</button><value-marker></value-marker><button><i>I</i></button><value-marker></value-marker><button disabled><u>U</u></button></div>
<div class="r e"><label for="emb"><input type="checkbox" id="emb">嵌入</label><button>字体管理器...</button></div></div>`);

define('property-inspector', `
:host{display:flex;flex-direction:column;width:379px;margin-top:6px;min-height:0;flex:none}
.head{background:#595959;border-radius:0 3px 3px 3px;padding:4px 4px;flex:none;margin-right:1px}
.top{display:flex;height:42px;border-bottom:1px solid #444;margin-bottom:5px}
.ic{margin:7px 8px 0 1px;--sb:#bcc6dc;--ar:#4169b0}
.g{display:grid;grid-template-columns:26px 1fr;flex:1;align-content:start;min-width:0;line-height:20px}
.g input{height:20px;background:#333;border-radius:4px;padding-left:6px;min-width:0;color:#fff}
.g span{padding-left:2px}.g .k{padding:0}
.sep{border-left:1px solid #444;margin:0 3px 4px 4px}
.v{display:flex;height:22px;border:1px solid #333}.v button{width:24px}.v .on{background:#ccc}
.find{display:flex;align-items:center;background:#333;border-radius:4px;height:20px;padding-right:1px}
.find input{flex:1;padding-left:6px;font-style:italic}.find input::placeholder{color:#aaa;opacity:1}
.area{flex:1;min-height:0;display:flex;margin-top:2px}
.list{flex:1;overflow:hidden;display:flex;flex-direction:column;background:#333;min-width:0}
scroll-track{--inset:0;padding:6px 0 5px;margin-left:1px}`,
`<dock-tabs tabs="项目(J)|属性(I)|资源(O)|数据(D)" active="1"></dock-tabs>
<div class="head"><div class="top"><span class="ic">${I('viewer')}</span><div class="g"><label for="nm">名称</label><input id="nm" value="&lt;无名称&gt;"><span class="k">类型</span><span>ScrollViewer</span></div><span class="sep"></span><div class="v"><button class="on" aria-label="属性">${I('propview')}</button><button aria-label="事件">${I('eventview')}</button></div></div>
<div class="find"><input aria-label="搜索" placeholder="搜索">${I('search')}</div></div>
<div class="area"><div class="list">
<prop-section heading="画笔" brush><brush-editor></brush-editor></prop-section>
<prop-section heading="外观"><prop-row kind="slider" label="Opacity" value="100%"></prop-row><prop-row kind="select" label="Visibility" value="Visible"></prop-row><prop-row kind="thick" label="BorderThickness" value="0|0|0|0"></prop-row><prop-row kind="new" label="Effect"></prop-row></prop-section>
<prop-section heading="布局"><prop-row kind="auto" label="Width" value="自动(293)"></prop-row><prop-row kind="auto" label="Height" value="自动(209)"></prop-row><prop-row kind="pair" label="Row|RowSpan" value="0|1"></prop-row><prop-row kind="pair" label="Column|ColumnSp..." value="0|1"></prop-row><prop-row kind="text" label="ZIndex" value="0"></prop-row><prop-row kind="align" label="HorizontalAlignment" value="hl|hc|hr|hs"></prop-row><prop-row kind="align" label="VerticalAlignment" value="vt|vc|vb|vs"></prop-row><prop-row kind="thick" label="Margin" value="137|194|129|103" set></prop-row></prop-section>
<prop-section heading="公共属性"><prop-row kind="text" label="Content"></prop-row><prop-row kind="select" label="Cursor"></prop-row><prop-row kind="new" label="DataContext"></prop-row><prop-row kind="check" label="IsEnabled"></prop-row><prop-row kind="text" label="ToolTip"></prop-row></prop-section>
<prop-section heading="文本" txt><text-editor></text-editor></prop-section>
</div><scroll-track vertical parts="4 784 48"></scroll-track></div>`);

/* ---------- bottom ---------- */
define('task-bar', `
:host{display:flex;height:8px;background:#729fca;border-top:1px solid #5b87b3;overflow:hidden}
.d{width:54px;background:#333;margin-top:-1px}
.q{display:flex;width:192px;padding:3px 17px 0 20px;justify-content:space-between}
.p{width:32px;background:#702a8c;height:5px}
.t{width:158px;margin-right:4px;background:#8fb2d6;border:1px solid #c3d7ea;border-bottom:0;padding:2px 0 0 20px;box-shadow:0 0 0 1px #557ea8}
.t.on{background:#a5c3dd;border-color:#fff}.sp{flex:1}
.clock{margin:5px 45px 0 0}`,
`<span class="d"></span><span class="q">${I('tfolder')}${I('tcircle')}<span class="p"></span></span><span class="t">${I('tie')}</span><span class="t">${I('tdir')}</span><span class="t">${I('twin')}</span><span class="t on">${I('twin')}</span><span class="sp"></span>
<svg class="clock" width="52" height="3"><path d="M1 3V.5h7V3M12 3V0M17 3V0M20 1h1M40 3V.5h10V3M43 1v2M47 1v2" stroke="#fff" fill="none"/></svg>`);

define('results-bar', `
:host{display:flex;height:24px;padding:2px 0 0 1px;flex:none}
button{background:#333;border-radius:4px 4px 0 0;padding:0 8px;height:22px}`,
`<button>结果(U)</button>`);

define('blend-app', `
:host{display:flex;flex-direction:column;height:100vh;position:relative;overflow:hidden}
.main{flex:1;display:flex;min-height:0}
tool-box{margin-top:3px}
.left{display:flex;flex-direction:column;width:338px;margin:6px 0 0 2px;min-height:0;flex:none}
.mark{position:absolute;pointer-events:none}
.m1{left:0;top:56px}.m2{right:231px;top:34px}`,
`<title-bar></title-bar><menu-bar></menu-bar>
<div class="main"><tool-box></tool-box><div class="left"><trigger-panel></trigger-panel><objects-panel></objects-panel></div><document-view></document-view><property-inspector></property-inspector></div>
<results-bar></results-bar><task-bar></task-bar>
<svg class="mark m1" width="57" height="58"><ellipse cx="28.500" cy="29" rx="27" ry="28" fill="none" stroke="#f00" stroke-width="1.200"/></svg>
<svg class="mark m2" width="131" height="68"><ellipse cx="65.500" cy="34" rx="64.500" ry="33" fill="none" stroke="#f00" stroke-width="1.200"/></svg>`);
</script>
</body>
</html>
